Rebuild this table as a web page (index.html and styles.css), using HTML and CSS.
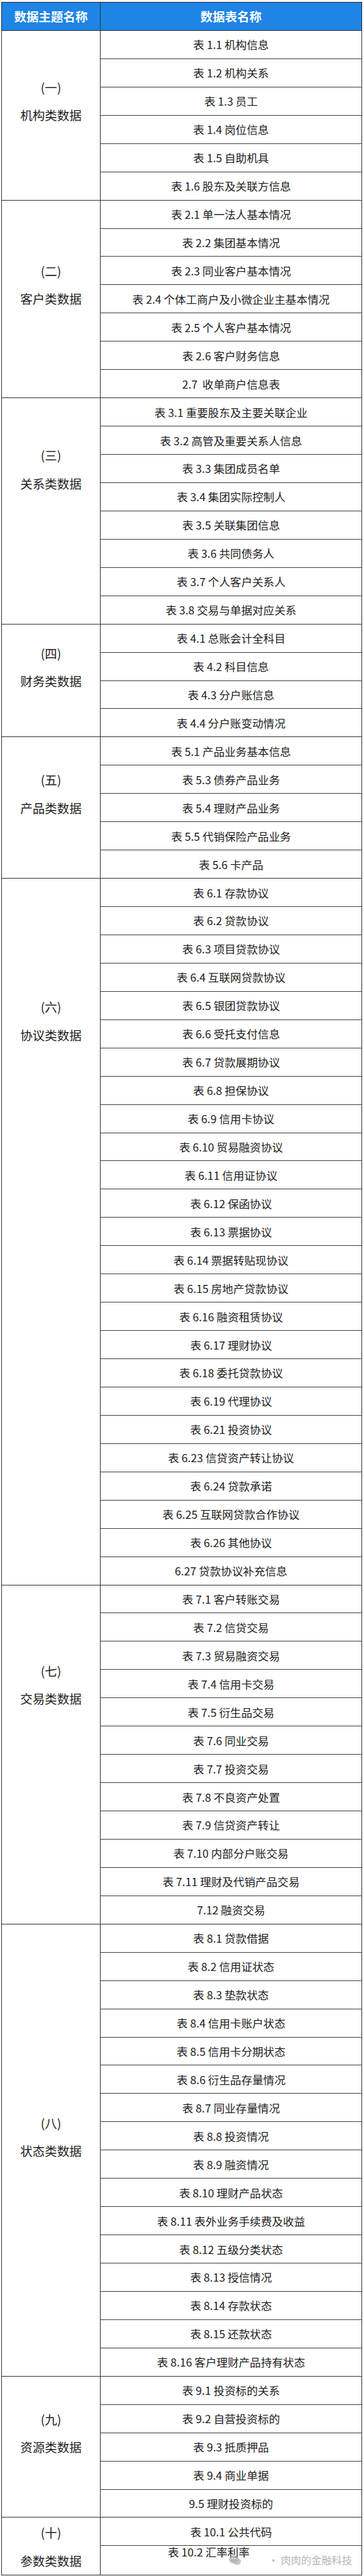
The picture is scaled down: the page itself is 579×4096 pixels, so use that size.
FILE: index.html
```html
<!DOCTYPE html>
<html lang="zh-CN">
<head>
<meta charset="utf-8">
<title>数据表目录</title>
<link rel="stylesheet" href="styles.css">
</head>
<body>
<div class="page">
  <div class="table">
    <div class="head">
      <div class="head-topic">数据主题名称</div>
      <div class="head-name">数据表名称</div>
    </div>

    <div class="group">
      <div class="topic g1"><span class="num">(一)</span><span class="label">机构类数据</span></div>
      <div class="items">
        <div class="item">表 1.1 机构信息</div>
        <div class="item">表 1.2 机构关系</div>
        <div class="item">表 1.3 员工</div>
        <div class="item">表 1.4 岗位信息</div>
        <div class="item">表 1.5 自助机具</div>
        <div class="item">表 1.6 股东及关联方信息</div>
      </div>
    </div>

    <div class="group">
      <div class="topic g2"><span class="num">(二)</span><span class="label">客户类数据</span></div>
      <div class="items">
        <div class="item">表 2.1 单一法人基本情况</div>
        <div class="item">表 2.2 集团基本情况</div>
        <div class="item">表 2.3 同业客户基本情况</div>
        <div class="item">表 2.4 个体工商户及小微企业主基本情况</div>
        <div class="item">表 2.5 个人客户基本情况</div>
        <div class="item">表 2.6 客户财务信息</div>
        <div class="item">2.7&nbsp;&nbsp;收单商户信息表</div>
      </div>
    </div>

    <div class="group">
      <div class="topic g3"><span class="num">(三)</span><span class="label">关系类数据</span></div>
      <div class="items">
        <div class="item">表 3.1 重要股东及主要关联企业</div>
        <div class="item">表 3.2 高管及重要关系人信息</div>
        <div class="item">表 3.3 集团成员名单</div>
        <div class="item">表 3.4 集团实际控制人</div>
        <div class="item">表 3.5 关联集团信息</div>
        <div class="item">表 3.6 共同债务人</div>
        <div class="item">表 3.7 个人客户关系人</div>
        <div class="item">表 3.8 交易与单据对应关系</div>
      </div>
    </div>

    <div class="group">
      <div class="topic g4"><span class="num">(四)</span><span class="label">财务类数据</span></div>
      <div class="items">
        <div class="item">表 4.1 总账会计全科目</div>
        <div class="item">表 4.2 科目信息</div>
        <div class="item">表 4.3 分户账信息</div>
        <div class="item">表 4.4 分户账变动情况</div>
      </div>
    </div>

    <div class="group">
      <div class="topic g5"><span class="num">(五)</span><span class="label">产品类数据</span></div>
      <div class="items">
        <div class="item">表 5.1 产品业务基本信息</div>
        <div class="item">表 5.3 债券产品业务</div>
        <div class="item">表 5.4 理财产品业务</div>
        <div class="item">表 5.5 代销保险产品业务</div>
        <div class="item">表 5.6 卡产品</div>
      </div>
    </div>

    <div class="group">
      <div class="topic g6"><span class="num">(六)</span><span class="label">协议类数据</span></div>
      <div class="items">
        <div class="item">表 6.1 存款协议</div>
        <div class="item">表 6.2 贷款协议</div>
        <div class="item">表 6.3 项目贷款协议</div>
        <div class="item">表 6.4 互联网贷款协议</div>
        <div class="item">表 6.5 银团贷款协议</div>
        <div class="item">表 6.6 受托支付信息</div>
        <div class="item">表 6.7 贷款展期协议</div>
        <div class="item">表 6.8 担保协议</div>
        <div class="item">表 6.9 信用卡协议</div>
        <div class="item">表 6.10 贸易融资协议</div>
        <div class="item">表 6.11 信用证协议</div>
        <div class="item">表 6.12 保函协议</div>
        <div class="item">表 6.13 票据协议</div>
        <div class="item">表 6.14 票据转贴现协议</div>
        <div class="item">表 6.15 房地产贷款协议</div>
        <div class="item">表 6.16 融资租赁协议</div>
        <div class="item">表 6.17 理财协议</div>
        <div class="item">表 6.18 委托贷款协议</div>
        <div class="item">表 6.19 代理协议</div>
        <div class="item">表 6.21 投资协议</div>
        <div class="item">表 6.23 信贷资产转让协议</div>
        <div class="item">表 6.24 贷款承诺</div>
        <div class="item">表 6.25 互联网贷款合作协议</div>
        <div class="item">表 6.26 其他协议</div>
        <div class="item">6.27 贷款协议补充信息</div>
      </div>
    </div>

    <div class="group">
      <div class="topic g7"><span class="num">(七)</span><span class="label">交易类数据</span></div>
      <div class="items">
        <div class="item">表 7.1 客户转账交易</div>
        <div class="item">表 7.2 信贷交易</div>
        <div class="item">表 7.3 贸易融资交易</div>
        <div class="item">表 7.4 信用卡交易</div>
        <div class="item">表 7.5 衍生品交易</div>
        <div class="item">表 7.6 同业交易</div>
        <div class="item">表 7.7 投资交易</div>
        <div class="item">表 7.8 不良资产处置</div>
        <div class="item">表 7.9 信贷资产转让</div>
        <div class="item">表 7.10 内部分户账交易</div>
        <div class="item">表 7.11 理财及代销产品交易</div>
        <div class="item">7.12 融资交易</div>
      </div>
    </div>

    <div class="group">
      <div class="topic g8"><span class="num">(八)</span><span class="label">状态类数据</span></div>
      <div class="items">
        <div class="item">表 8.1 贷款借据</div>
        <div class="item">表 8.2 信用证状态</div>
        <div class="item">表 8.3 垫款状态</div>
        <div class="item">表 8.4 信用卡账户状态</div>
        <div class="item">表 8.5 信用卡分期状态</div>
        <div class="item">表 8.6 衍生品存量情况</div>
        <div class="item">表 8.7 同业存量情况</div>
        <div class="item">表 8.8 投资情况</div>
        <div class="item">表 8.9 融资情况</div>
        <div class="item">表 8.10 理财产品状态</div>
        <div class="item">表 8.11 表外业务手续费及收益</div>
        <div class="item">表 8.12 五级分类状态</div>
        <div class="item">表 8.13 授信情况</div>
        <div class="item">表 8.14 存款状态</div>
        <div class="item">表 8.15 还款状态</div>
        <div class="item">表 8.16 客户理财产品持有状态</div>
      </div>
    </div>

    <div class="group">
      <div class="topic g9"><span class="num">(九)</span><span class="label">资源类数据</span></div>
      <div class="items">
        <div class="item">表 9.1 投资标的关系</div>
        <div class="item">表 9.2 自营投资标的</div>
        <div class="item">表 9.3 抵质押品</div>
        <div class="item">表 9.4 商业单据</div>
        <div class="item">9.5 理财投资标的</div>
      </div>
    </div>

    <div class="group">
      <div class="topic g10"><span class="num">(十)</span><span class="label">参数类数据</span></div>
      <div class="items">
        <div class="item">表 10.1 公共代码</div>
        <div class="item item-last">表 10.2 汇率利率
          <svg class="wm-icon" width="20" height="18" viewBox="0 0 20 18">
            <ellipse cx="8" cy="7.5" rx="7.5" ry="6.5" fill="#9a9a9a" fill-opacity="0.7"/>
            <ellipse cx="13" cy="11" rx="6.2" ry="5.4" fill="#b8b8b8" fill-opacity="0.8"/>
            <circle cx="5.5" cy="6" r="1" fill="#fff"/>
            <circle cx="10" cy="6" r="1" fill="#fff"/>
          </svg>
          <span class="wm-text">· 肉肉的金融科技</span>
        </div>
      </div>
    </div>
  </div>
</div>
</body>
</html>
```

FILE: styles.css
```css
* {
  box-sizing: border-box;
}

html, body {
  margin: 0;
  padding: 0;
  background: #ffffff;
}

body {
  font-family: "Noto Sans CJK SC", "Noto Sans", sans-serif;
  color: #1f1f1f;
}

.page {
  padding: 3px 3px 0 2px;
}

.table {
  border-top: 1px solid #2e2e2e;
  border-left: 1px solid #2e2e2e;
  border-right: 1px solid #2e2e2e;
}

.head {
  display: flex;
  height: 44.95px;
  background: #1e84e6;
  border-bottom: 1px solid #2e2e2e;
  color: #ffffff;
  font-weight: 700;
  font-size: 19.5px;
}

.head-topic {
  width: 157px;
  flex: none;
  border-right: 1px solid #2e2e2e;
  display: flex;
  align-items: center;
  justify-content: center;
}

.head-name {
  flex: 1;
  display: flex;
  align-items: center;
  justify-content: center;
}

.group {
  display: flex;
  border-bottom: 1px solid #2e2e2e;
}

.topic {
  width: 157px;
  flex: none;
  border-right: 1px solid #2e2e2e;
  display: flex;
  flex-direction: column;
  align-items: center;
  font-size: 19.5px;
  color: #222;
}

.topic .num,
.topic .label {
  height: 44.5px;
  line-height: 44.5px;
}

.g1 { padding-top: 68px; }
.g2 { padding-top: 90px; }
.g3 { padding-top: 69px; }
.g4 { padding-top: 24px; }
.g5 { padding-top: 46px; }
.g6 { padding-top: 182px; }
.g7 { padding-top: 114px; }
.g8 { padding-top: 294px; }
.g9 { padding-top: 46px; }
.g10 { padding-top: 2px; }

.items {
  flex: 1;
  display: flex;
  flex-direction: column;
}

.item {
  height: 44.95px;
  display: flex;
  align-items: center;
  justify-content: center;
  font-size: 17.6px;
  color: #222;
  border-bottom: 1px solid #3a3a3a;
  white-space: pre;
}

.item:last-child {
  height: 43.95px;
  border-bottom: none;
}

.item-last {
  position: relative;
}

.wm-icon {
  position: absolute;
  left: 204px;
  top: 14px;
  display: block;
}

.wm-text {
  position: absolute;
  right: 15px;
  top: 0;
  height: 100%;
  display: flex;
  align-items: center;
  font-size: 16.2px;
  color: #b5b5b5;
  white-space: nowrap;
}
```
